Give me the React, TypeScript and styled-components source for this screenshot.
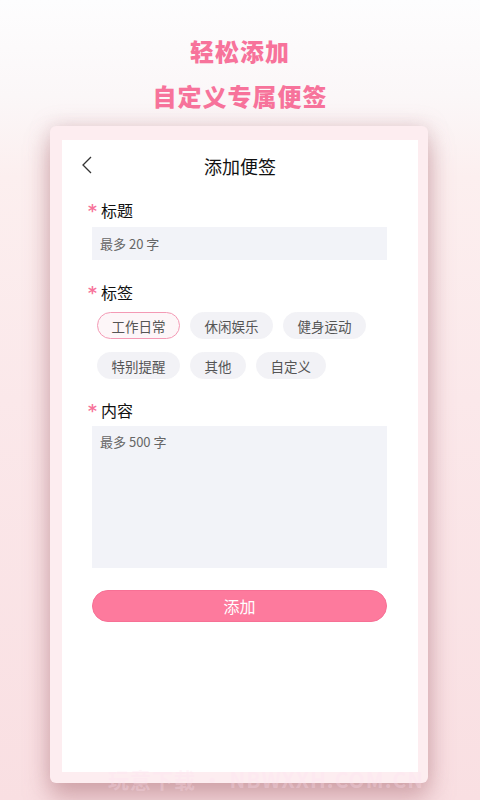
import React from "react";
import styled, { createGlobalStyle } from "styled-components";

const Global = createGlobalStyle`
  html, body { margin: 0; padding: 0; }
  body {
    width: 480px;
    height: 800px;
    overflow: hidden;
    font-family: "Noto Sans CJK SC", "Noto Sans", sans-serif;
  }
`;

const Page = styled.div`
  position: relative;
  width: 480px;
  height: 800px;
  background: linear-gradient(180deg, #fdfdfe 0%, #fbf7f8 12%, #fcefef 22%, #fbe8ea 50%, #f9dfe2 100%);
  display: flex;
  flex-direction: column;
  align-items: center;
  overflow: hidden;
`;

const Headline = styled.div`
  margin-top: 28px;
  font-size: 24px;
  line-height: 45px;
  font-weight: 900;
  color: #f7739b;
  letter-spacing: 1px;
  text-align: center;
`;

const Frame = styled.div`
  margin-top: 8px;
  margin-left: -2px;
  width: 378px;
  height: 657px;
  box-sizing: border-box;
  padding: 14px 10px 11px 12px;
  background: #fdedf0;
  border-radius: 6px;
  box-shadow: 0 16px 24px rgba(180, 120, 128, 0.5), 0 0 20px rgba(190, 140, 148, 0.35);
  display: flex;
`;

const Screen = styled.div`
  flex: 1;
  background: #ffffff;
  display: flex;
  flex-direction: column;
`;

const TopBar = styled.div`
  position: relative;
  height: 52px;
  display: flex;
  align-items: center;
  justify-content: center;
  font-size: 18px;
  color: #111;
`;

const Back = styled.svg`
  position: absolute;
  left: 19px;
  top: 16px;
`;

const Form = styled.div`
  display: flex;
  flex-direction: column;
  padding: 6px 31px 0 30px;
`;

const Label = styled.div<{ $top?: number }>`
  margin-top: ${(p) => p.$top ?? 0}px;
  margin-left: -4px;
  height: 24px;
  display: flex;
  align-items: center;
  font-size: 16px;
  color: #111;
`;

const Star = styled.span`
  color: #f7739b;
  font-family: "DejaVu Sans", sans-serif;
  font-size: 17px;
  font-weight: 700;
  margin-right: 4px;
  line-height: 1;
  transform: translateY(1px);
`;

const Field = styled.div<{ $h: number; $top: number; $align: string }>`
  margin-top: ${(p) => p.$top}px;
  height: ${(p) => p.$h}px;
  background: #f2f3f8;
  display: flex;
  align-items: ${(p) => p.$align};
  padding: ${(p) => (p.$align === "center" ? "0 8px" : "6px 8px")};
  font-size: 13px;
  color: #666;
  box-sizing: border-box;
`;

const Chips = styled.div`
  margin-top: 8px;
  padding-left: 5px;
  display: flex;
  flex-wrap: wrap;
  column-gap: 10px;
  row-gap: 13px;
  width: 280px;
`;

const Chip = styled.div<{ $active?: boolean }>`
  height: 27px;
  box-sizing: border-box;
  padding: 0 13.5px;
  border-radius: 14px;
  display: flex;
  align-items: center;
  font-size: 13.5px;
  color: #555;
  background: ${(p) => (p.$active ? "#fdf6f8" : "#f2f2f6")};
  border: 1px solid ${(p) => (p.$active ? "#f49ab5" : "#f2f2f6")};
`;

const Submit = styled.div`
  margin-top: 22px;
  height: 32px;
  border-radius: 16px;
  background: #fd7a9d;
  border: 1px solid #f77095;
  box-sizing: border-box;
  color: #fff;
  font-size: 16px;
  display: flex;
  align-items: center;
  justify-content: center;
`;

const Watermark = styled.div`
  position: absolute;
  left: 108px;
  top: 764px;
  font-size: 21px;
  font-weight: 700;
  letter-spacing: 1px;
  color: rgba(255, 225, 240, 0.3);
  white-space: nowrap;
`;

const tags = ["工作日常", "休闲娱乐", "健身运动", "特别提醒", "其他", "自定义"];

export default function App() {
  return (
    <>
      <Global />
      <Page>
        <Headline>
          轻松添加
          <br />
          自定义专属便签
        </Headline>
        <Frame>
          <Screen>
            <TopBar>
              <Back width="12" height="18" viewBox="0 0 12 18">
                <polyline points="10,1 2,9 10,17" fill="none" stroke="#333" strokeWidth="1.3" />
              </Back>
              添加便签
            </TopBar>
            <Form>
              <Label>
                <Star>*</Star>标题
              </Label>
              <Field $h={33} $top={5} $align="center">最多 20 字</Field>
              <Label $top={20}>
                <Star>*</Star>标签
              </Label>
              <Chips>
                {tags.map((t, i) => (
                  <Chip key={t} $active={i === 0}>
                    {t}
                  </Chip>
                ))}
              </Chips>
              <Label $top={19}>
                <Star>*</Star>内容
              </Label>
              <Field $h={142} $top={4} $align="flex-start">最多 500 字</Field>
              <Submit>添加</Submit>
            </Form>
          </Screen>
        </Frame>
        <Watermark>玩意下载 · NBWXXH.COM.CN</Watermark>
      </Page>
    </>
  );
}
